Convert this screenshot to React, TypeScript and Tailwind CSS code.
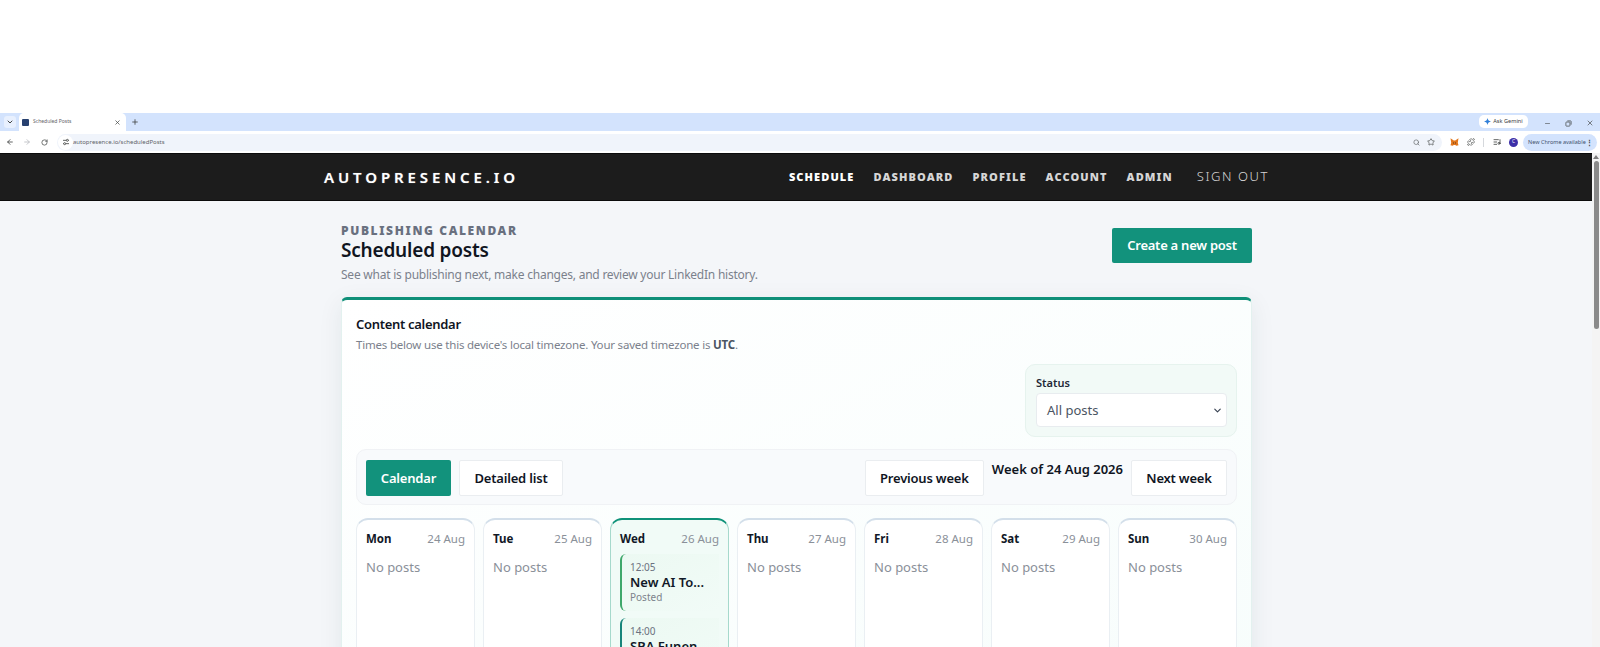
import { ArrowLeft, ArrowRight, ChevronDown, ListMusic, Minus, Plus, Puzzle, RotateCw, Search, Star, X } from "lucide-react"

const navLinks = [
  { label: "SCHEDULE", className: "text-white" },
  { label: "DASHBOARD", className: "text-[#d6d6d6]" },
  { label: "PROFILE", className: "text-[#d6d6d6]" },
  { label: "ACCOUNT", className: "text-[#d6d6d6]" },
  { label: "ADMIN", className: "text-[#d6d6d6]" },
]

const days = [
  { name: "Mon", date: "24 Aug" },
  { name: "Tue", date: "25 Aug" },
  { name: "Wed", date: "26 Aug", today: true },
  { name: "Thu", date: "27 Aug" },
  { name: "Fri", date: "28 Aug" },
  { name: "Sat", date: "29 Aug" },
  { name: "Sun", date: "30 Aug" },
]

const ChromeBar = () => (
  <div className="font-['Noto_Sans',sans-serif] text-[#444746]">
    <div className="h-[18px] bg-[#d3e3fd] flex items-end pl-[4px] pr-[6px]">
      <div className="w-[12px] h-[12px] mb-[3px] rounded-[3px] bg-[#e8f0fe] flex items-center justify-center">
        <ChevronDown size={8} strokeWidth={3} />
      </div>
      <div className="w-[107px] h-[18px] ml-[3px] bg-white rounded-t-[5px] flex items-center pl-[3px] pr-[5px]">
        <div className="w-[7px] h-[7px] bg-[#27406f] rounded-[1px]" />
        <span className="ml-[4px] text-[5px] flex-1 text-[#5f6368]">Scheduled Posts</span>
        <X size={7} strokeWidth={2.5} />
      </div>
      <Plus size={8} strokeWidth={2.5} className="ml-[5px] mb-[5px]" />
      <div className="ml-auto mb-[3px] h-[13px] w-[49px] bg-white rounded-[5px] flex items-center justify-center gap-[2px]">
        <svg width="7" height="7" viewBox="0 0 24 24"><path d="M12 0c1 7 5 11 12 12-7 1-11 5-12 12-1-7-5-11-12-12 7-1 11-5 12-12z" fill="#2f7fd8" /></svg>
        <span className="text-[5.6px] text-[#3c4043] whitespace-nowrap">Ask Gemini</span>
      </div>
      <div className="flex items-center gap-[14px] ml-[16px] mb-[4px]">
        <Minus size={7} />
        <svg width="7" height="7" viewBox="0 0 24 24" fill="none" stroke="currentColor" strokeWidth="2.5"><rect x="3" y="7" width="14" height="14" rx="2" /><path d="M8 3h11a2 2 0 0 1 2 2v11" /></svg>
        <X size={8} />
      </div>
    </div>
    <div className="h-[22px] bg-white flex items-center pl-[6px] pr-[3px]">
      <ArrowLeft size={8} strokeWidth={2.5} />
      <ArrowRight size={8} strokeWidth={2.5} className="ml-[9px] text-[#b9bcc0]" />
      <RotateCw size={7} strokeWidth={2.5} className="ml-[10px]" />
      <div className="ml-[9px] w-[1385px] h-[17px] rounded-full bg-[#f0f4fb] flex items-center pl-[1px] pr-[7px]">
        <div className="w-[15px] h-[15px] rounded-full bg-white flex items-center justify-center">
          <svg width="8" height="8" viewBox="0 0 24 24" fill="none" stroke="currentColor" strokeWidth="2.5">
            <path d="M3 7h10M19 7h2M3 17h2M11 17h10" />
            <circle cx="16" cy="7" r="3" />
            <circle cx="8" cy="17" r="3" />
          </svg>
        </div>
        <span className="text-[6px] text-[#5f6368] flex-1">autopresence.io/scheduledPosts</span>
        <Search size={7} strokeWidth={2.5} className="text-[#6b6f73]" />
        <Star size={8} strokeWidth={2} className="ml-[7px]" />
      </div>
      <svg width="9" height="8" viewBox="0 0 24 22" className="ml-[8px]"><path d="M1 1l9 6h4l9-6-2 12 2 7-6 1-3-2h-4l-3 2-6-1 2-7z" fill="#e2761b" /><path d="M8 12l3 2-3 2zM16 12l-3 2 3 2z" fill="#3d2a1c" /></svg>
      <Puzzle size={8} strokeWidth={2} className="ml-[8px]" />
      <div className="ml-[8px] w-px h-[9px] bg-[#d5d8dc]" />
      <ListMusic size={8} strokeWidth={2.5} className="ml-[9px]" />
      <div className="ml-[8px] w-[9px] h-[9px] rounded-full bg-[#3c2fa8] flex items-center justify-center text-white text-[5px]">C</div>
      <div className="ml-[5px] h-[17px] w-[74px] rounded-full bg-[#d3e3fd] flex items-center pl-[5px] pr-[4px] justify-between">
        <span className="text-[5.5px] text-[#41506b] whitespace-nowrap">New Chrome available</span>
        <span className="text-[7px] leading-none font-bold">⋮</span>
      </div>
    </div>
  </div>
)

const Nav = () => (
  <nav className="h-[48px] bg-[#1c1c1c] border-y border-[#0b0b0b] flex items-center justify-between pl-[324px] pr-[323px]">
    <span className="text-[15px] font-semibold tracking-[0.26em] text-white [text-shadow:0_0_1px_rgba(255,255,255,0.5)]">AUTOPRESENCE.IO</span>
    <div className="flex items-center">
      {navLinks.map((link) => (
        <span key={link.label} className={`text-[11px] font-black tracking-[0.1em] mr-[19px] ${link.className}`}>
          {link.label}
        </span>
      ))}
      <span className="ml-[5px] text-[13px] font-light tracking-[0.12em] text-[#d6d6d6]">SIGN OUT</span>
    </div>
  </nav>
)

const DayCard = ({ name, date, today }: { name: string; date: string; today?: boolean }) => (
  <div
    className={`flex-1 min-w-0 h-[200px] rounded-t-[12px] border border-t-2 pl-[9px] pr-[9px] pt-[10px] ${
      today
        ? "border-[#a6d9cc] border-t-[#0f9279] bg-[#f1fbf7]"
        : "border-[#eaeff3] border-t-[#d3dfea] bg-white"
    }`}
  >
    <div className="flex items-center justify-between h-[18px]">
      <span className="text-[11.5px] font-bold text-[#111827]">{name}</span>
      <span className="text-[11.5px] text-[#8a9099]">{date}</span>
    </div>
    {today ? (
      <div className="mt-[6px] flex flex-col gap-[7px]">
        <div className="h-[57px] rounded-l-[6px] border-l-2 border-[#3fa86b] bg-gradient-to-br from-[#ecf9f2] to-[#f1fbf7] pl-[8px] pt-[6px]">
          <div className="text-[10px] leading-[15px] text-[#6b7280]">12:05</div>
          <div className="text-[13px] leading-[15px] font-semibold text-[#111827] whitespace-nowrap">New AI To...</div>
          <div className="text-[10px] leading-[15px] text-[#7d838c]">Posted</div>
        </div>
        <div className="h-[57px] rounded-l-[6px] border-l-2 border-[#17857a] bg-gradient-to-br from-[#ecf9f2] to-[#f1fbf7] pl-[8px] pt-[6px]">
          <div className="text-[10px] leading-[15px] text-[#6b7280]">14:00</div>
          <div className="text-[13px] leading-[15px] font-semibold text-[#111827] whitespace-nowrap">SBA Funen</div>
        </div>
      </div>
    ) : (
      <div className="mt-[10px] text-[13px] leading-[18px] text-[#8a9099]">No posts</div>
    )}
  </div>
)

export default function App() {
  return (
    <div className="h-[647px] overflow-hidden bg-white flex flex-col font-['Noto_Sans',sans-serif]">
      <div className="h-[113px] shrink-0" />
      <ChromeBar />
      <div className="flex-1 min-h-0 flex">
        <div className="flex-1 min-w-0 overflow-hidden bg-[#f4f6f9]">
          <Nav />
          <main className="w-[911px] ml-[341px] pt-[22px]">
            <div className="flex items-start justify-between">
              <div>
                <div className="text-[12px] leading-[16px] font-black tracking-[0.135em] text-[#69707f]">PUBLISHING CALENDAR</div>
                <h1 className="text-[19px] leading-[23px] font-semibold tracking-[-0.2px] text-[#10151f]">Scheduled posts</h1>
                <p className="mt-[4px] text-[12px] leading-[18px] tracking-[-0.23px] text-[#7b818c]">See what is publishing next, make changes, and review your LinkedIn history.</p>
              </div>
              <button className="mt-[5px] w-[140px] h-[35px] pt-[1px] rounded-[2px] bg-[#12927c] text-white text-[13px] font-semibold tracking-[-0.25px]">Create a new post</button>
            </div>

            <section className="mt-[13px] border-t-[3px] border-[#0f8f78] rounded-t-[6px] bg-gradient-to-br from-white to-[#f7fdfc] border-x border-x-[#e3f1ef] px-[14px] pt-[15px] shadow-[0_6px_24px_rgba(15,60,70,0.08)] h-[400px]">
              <h2 className="text-[13px] leading-[18px] font-semibold tracking-[-0.3px] text-[#10151f]">Content calendar</h2>
              <p className="mt-[3px] text-[11.5px] leading-[18px] tracking-[-0.2px] text-[#7b818c]">
                Times below use this device's local timezone. Your saved timezone is <strong className="font-bold text-[#4b5563]">UTC</strong>.
              </p>

              <div className="mt-[10px] flex justify-end">
                <div className="w-[212px] h-[73px] rounded-[10px] border border-[#e6f3ee] bg-[#f2faf7] pl-[10px] pr-[9px] pt-[10px]">
                  <div className="text-[11px] leading-[16px] font-semibold text-[#1f2937]">Status</div>
                  <div className="mt-[2px] h-[34px] pt-[1px] rounded-[4px] border border-[#e8ecef] bg-white flex items-center justify-between pl-[10px] pr-[3px]">
                    <span className="text-[13px] text-[#4b5563]">All posts</span>
                    <ChevronDown size={11} strokeWidth={2.5} className="text-[#374151]" />
                  </div>
                </div>
              </div>

              <div className="mt-[12px] h-[56px] rounded-[10px] border border-[#f0f2f5] bg-[#f8fafc] flex items-start pt-[10px] pl-[9px] pr-[9px]">
                <button className="w-[85px] h-[36px] pt-[1px] rounded-[2px] bg-[#12927c] text-white text-[13px] font-semibold tracking-[-0.2px]">Calendar</button>
                <button className="ml-[8px] w-[104px] h-[36px] pt-[1px] rounded-[2px] border border-[#eaedf0] bg-white text-[#10151f] text-[13px] font-semibold tracking-[-0.2px]">Detailed list</button>
                <button className="ml-auto w-[119px] h-[36px] pt-[1px] rounded-[2px] border border-[#eaedf0] bg-white text-[#10151f] text-[13px] font-semibold tracking-[-0.2px]">Previous week</button>
                <span className="mx-[8px] text-[13px] leading-[18px] font-semibold text-[#10151f] whitespace-nowrap">Week of 24 Aug 2026</span>
                <button className="w-[96px] h-[36px] pt-[1px] rounded-[2px] border border-[#eaedf0] bg-white text-[#10151f] text-[13px] font-semibold tracking-[-0.2px]">Next week</button>
              </div>

              <div className="mt-[13px] flex gap-[8px]">
                {days.map((day) => (
                  <DayCard key={day.name} {...day} />
                ))}
              </div>
            </section>
          </main>
        </div>
        <div className="w-[8px] shrink-0 bg-[#f4f4f4] flex flex-col items-center pt-[2px]">
          <div className="w-0 h-0 border-x-[3px] border-x-transparent border-b-[4px] border-b-[#7f7f7f]" />
          <div className="mt-[2px] w-[5px] h-[168px] rounded-full bg-[#8a8a8a]" />
        </div>
      </div>
    </div>
  )
}
